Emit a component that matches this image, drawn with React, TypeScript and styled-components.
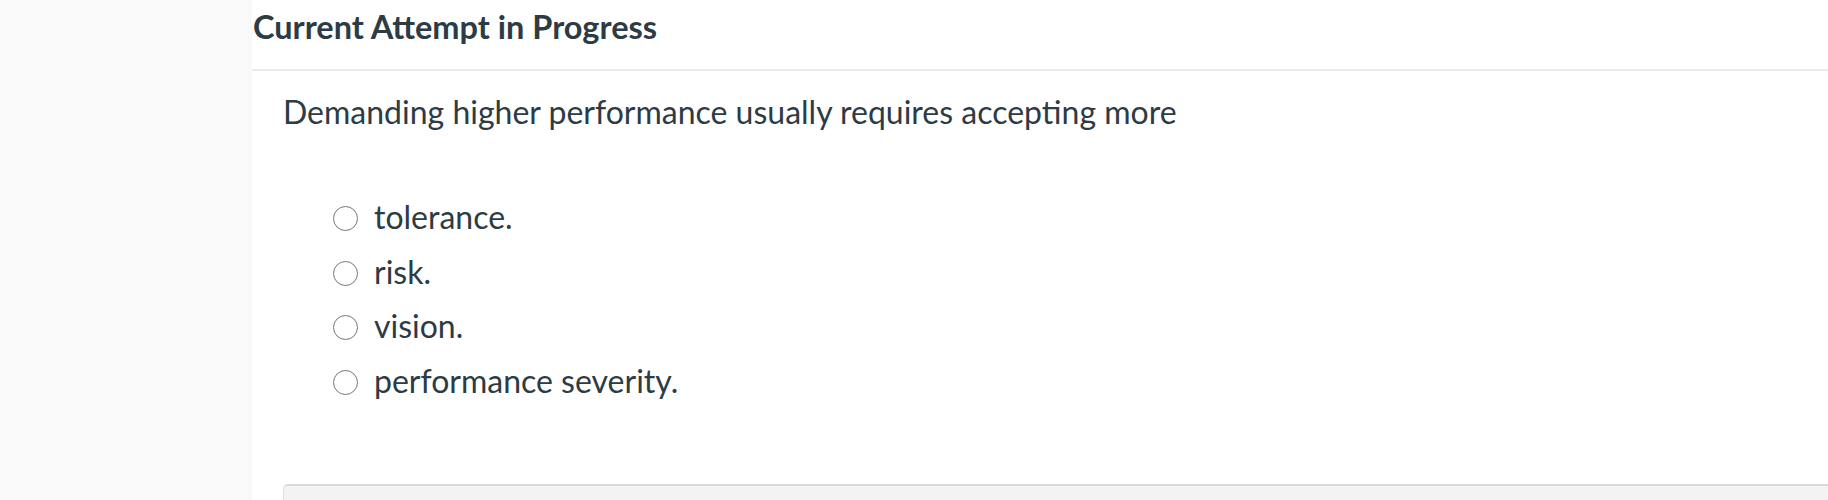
import React from "react";
import styled, { createGlobalStyle } from "styled-components";

const GlobalStyle = createGlobalStyle`
    body {
        margin: 0;
        background: #ffffff;
        font-family: Lato, "Noto Sans", sans-serif;
        color: #2d3b45;
    }
`;

const Page = styled.div`
    display: flex;
    height: 500px;
    overflow: hidden;
`;

const Sidebar = styled.aside`
    flex: 0 0 252px;
    background: #f9f9f9;
`;

const Main = styled.main`
    flex: 1;
    min-width: 0;
    background: #ffffff;
`;

const Header = styled.header`
    height: 71px;
    box-sizing: border-box;
    padding: 7px 0 0 1px;
    border-bottom: 2px solid #ebebeb;
`;

const Title = styled.h2`
    margin: 0;
    font-size: 32.5px;
    font-weight: 700;
    line-height: 1.2;
    color: #2d3b45;
`;

const Body = styled.section`
    padding: 22px 0 0 31px;
`;

const Question = styled.p`
    margin: 0;
    font-size: 32px;
    line-height: 1.2;
`;

const Options = styled.ul`
    list-style: none;
    margin: 0;
    padding: 67px 0 0 50px;
    display: flex;
    flex-direction: column;
    gap: 16px;
`;

const Option = styled.li`
    display: flex;
    align-items: flex-start;
    gap: 16px;
    font-size: 32px;
    line-height: 1.2;
`;

const Radio = styled.span`
    width: 25px;
    height: 25px;
    margin-top: 8px;
    box-sizing: border-box;
    border: 1.5px solid #777777;
    border-radius: 50%;
    background: #ffffff;
    flex: 0 0 auto;
`;

const AnswerBox = styled.div`
    margin-top: 84px;
    height: 60px;
    background: #f3f3f3;
    border-top: 2px solid #dadada;
    border-left: 1px solid #e2e2e2;
    border-top-left-radius: 5px;
`;

const choices = ["tolerance.", "risk.", "vision.", "performance severity."];

const App = () => {
    return (
        <>
            <GlobalStyle />
            <Page>
                <Sidebar />
                <Main>
                    <Header>
                        <Title>Current Attempt in Progress</Title>
                    </Header>
                    <Body>
                        <Question>Demanding higher performance usually requires accepting more</Question>
                        <Options>
                            {choices.map((c) => (
                                <Option key={c}>
                                    <Radio />
                                    {c}
                                </Option>
                            ))}
                        </Options>
                        <AnswerBox />
                    </Body>
                </Main>
            </Page>
        </>
    );
};

export default App;
